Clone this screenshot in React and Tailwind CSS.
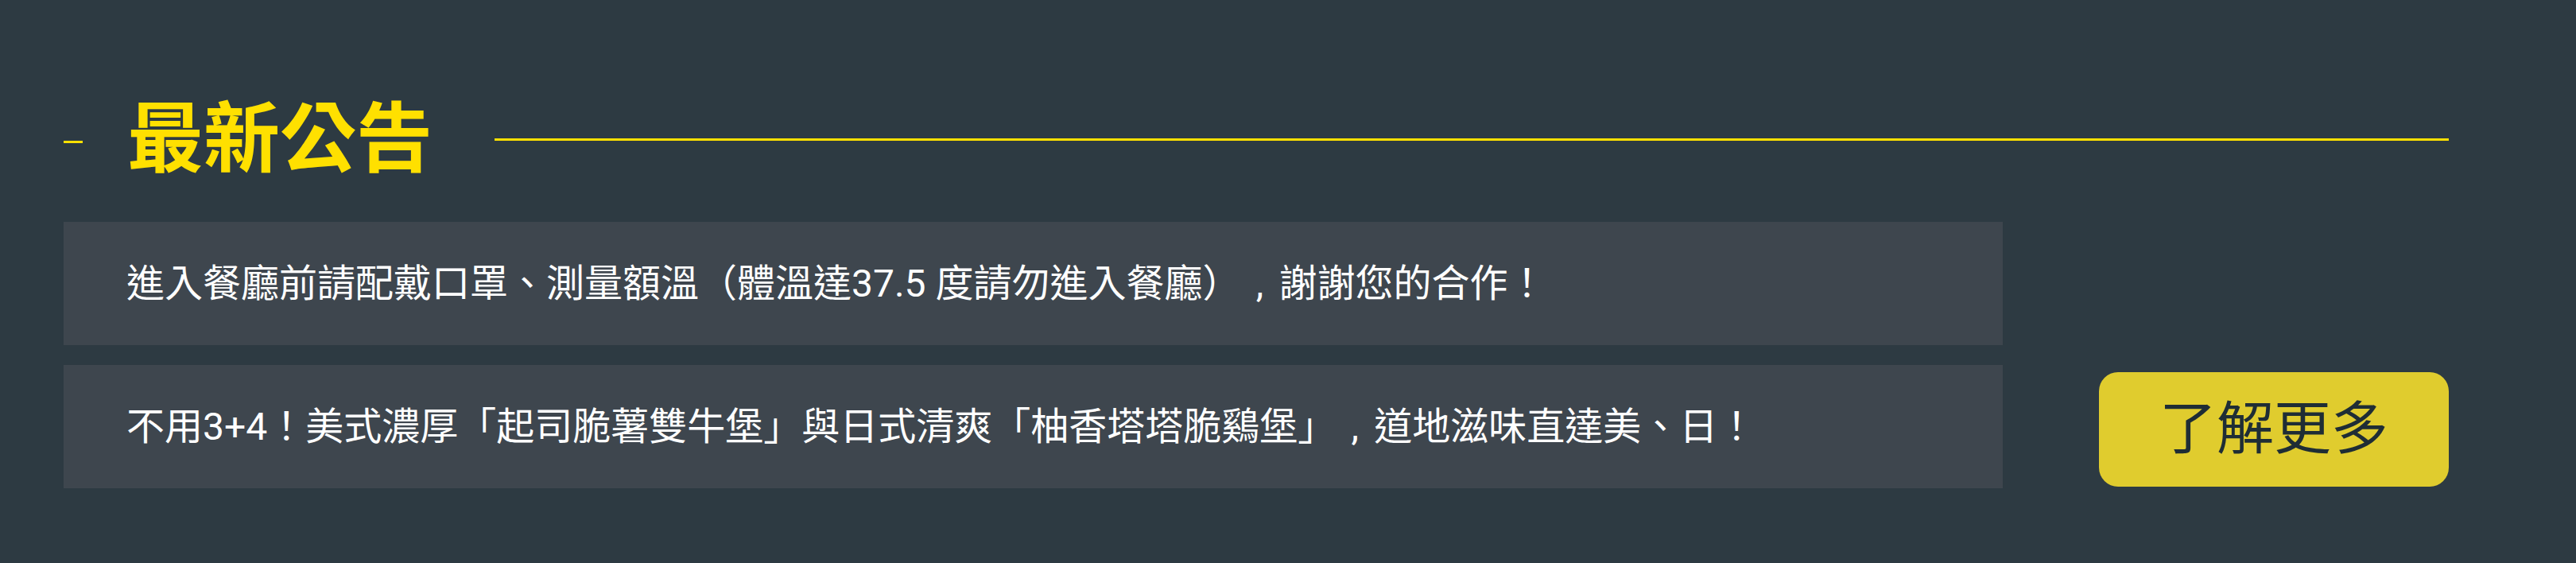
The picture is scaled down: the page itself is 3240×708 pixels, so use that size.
const notices = [
  "進入餐廳前請配戴口罩、測量額溫（體溫達37.5 度請勿進入餐廳），謝謝您的合作！",
  "不用3+4！美式濃厚「起司脆薯雙牛堡」與日式清爽「柚香塔塔脆鷄堡」，道地滋味直達美、日！",
];

// Taiwan-style full-width comma sits in the middle of its box
const withCenteredCommas = (text) =>
  text.split("，").flatMap((part, i) =>
    i === 0
      ? [part]
      : [
          <span key={i} className="inline-block w-[1em] text-center">
            ,
          </span>,
          part,
        ]
  );

export default function App() {
  return (
    <div
      lang="zh-TW"
      className="min-h-screen w-full bg-[#2d3a42] font-['Roboto','Noto_Sans_CJK_TC',sans-serif] [text-spacing-trim:space-all]"
    >
      <div className="ml-[80px] w-[3000px] pt-[127px]">
        {/* Heading */}
        <div className="flex h-[96px] items-center">
          <span className="mt-[6px] h-[3px] w-[24px] bg-[#ffe000]"></span>
          <h2 className="ml-[56px] text-[96px] font-bold leading-none text-[#ffe000]">
            最新公告
          </h2>
          <div className="ml-[78px] h-[3px] flex-1 bg-[#ffe000]"></div>
        </div>

        {/* Notices + button */}
        <div className="mt-[56px] flex items-end">
          <div className="flex w-[2439px] flex-col gap-[25px]">
            {notices.map((text) => (
              <div
                key={text}
                className="flex h-[155px] items-center bg-[#3e464e] pl-[79px] text-white"
              >
                <p className="text-[48px] leading-none">{withCenteredCommas(text)}</p>
              </div>
            ))}
          </div>
          <button
            type="button"
            className="mb-[2px] ml-auto flex h-[144px] w-[440px] items-center justify-center rounded-[24px] bg-[#e0cc2e] text-[72px] leading-none text-[#1f2d35]"
          >
            了解更多
          </button>
        </div>
      </div>
    </div>
  );
}
